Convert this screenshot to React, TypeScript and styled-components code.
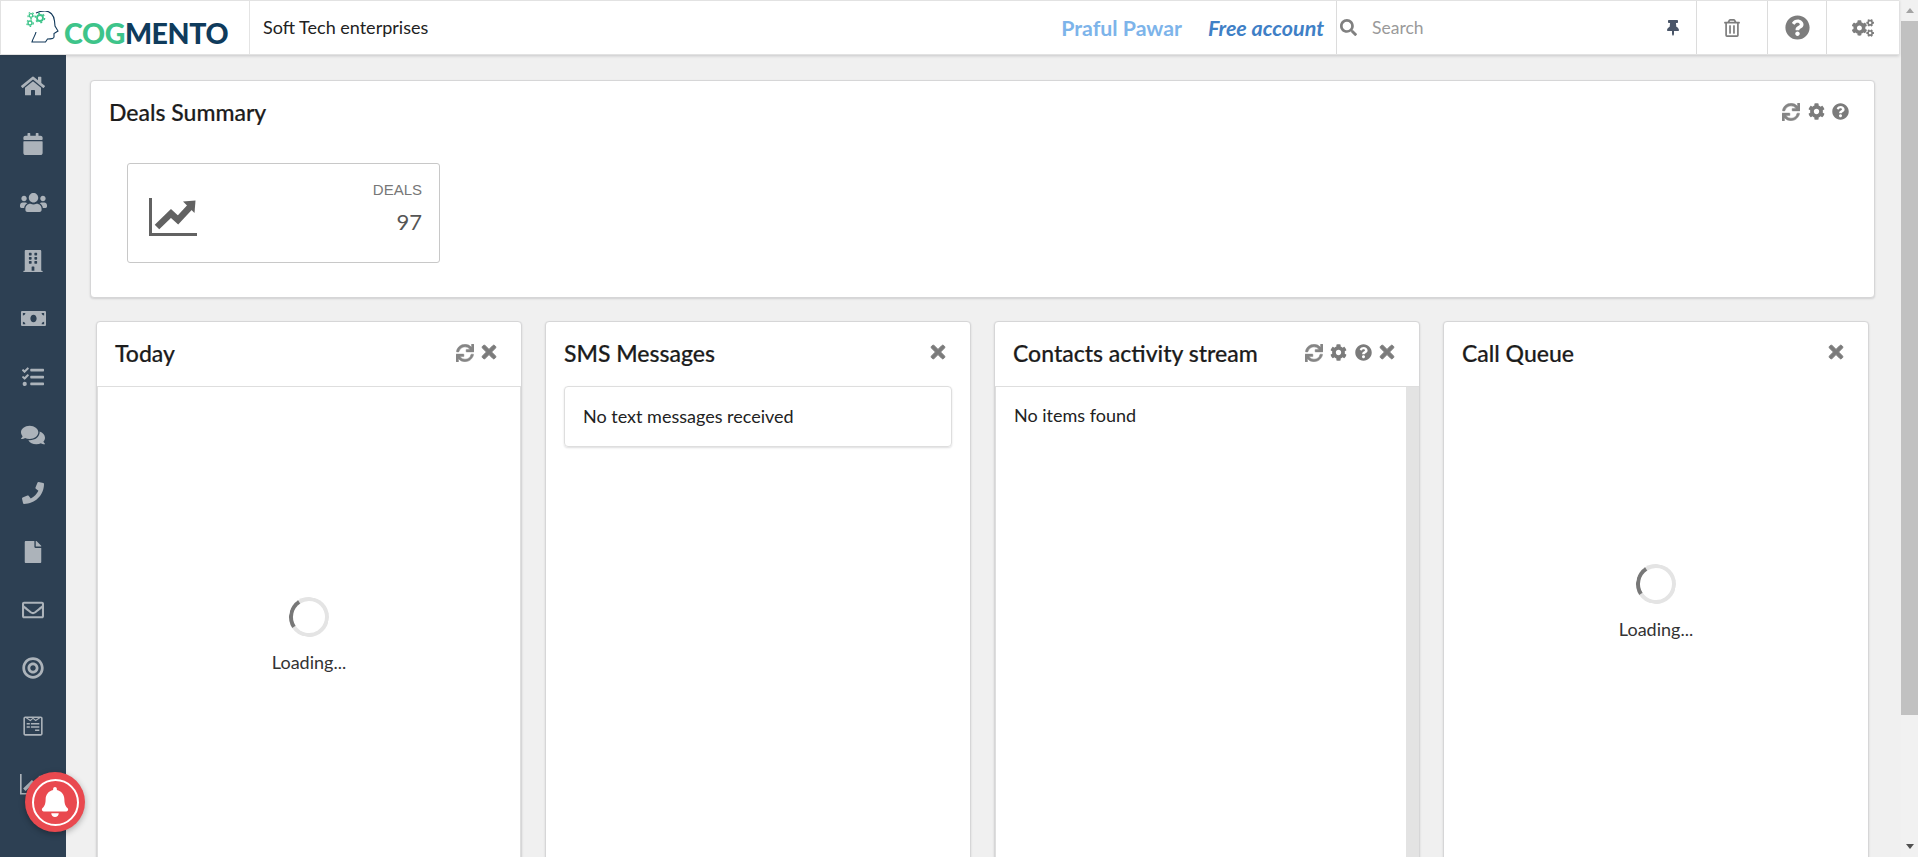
import React from "react";
import styled, { createGlobalStyle } from "styled-components";
import {
  FaBell,
  FaBuilding,
  FaBullseye,
  FaCalendar,
  FaCog,
  FaCogs,
  FaComments,
  FaFile,
  FaHome,
  FaMoneyBill,
  FaPhone,
  FaQuestionCircle,
  FaRegEnvelope,
  FaRegTrashAlt,
  FaSearch,
  FaSync,
  FaTasks,
  FaThumbtack,
  FaTimes,
  FaUsers,
  FaWpforms,
} from "react-icons/fa";

const GlobalStyle = createGlobalStyle`
  html, body {
    margin: 0;
    height: 100%;
    overflow: hidden;
    background: #fff;
  }
  * { box-sizing: border-box; }
  body {
    font-family: Lato, "Liberation Sans", sans-serif;
    font-size: 18px;
    color: #212121;
  }
`;

const Page = styled.div`
  display: flex;
  height: 100vh;
  overflow: hidden;
  background: #f0f0f0;
`;

const Main = styled.div`
  flex: 1;
  min-width: 0;
  display: flex;
  flex-direction: column;
`;

const TopBar = styled.header`
  position: relative;
  z-index: 2;
  flex: none;
  height: 55px;
  margin-right: 2px;
  display: flex;
  align-items: stretch;
  background: #fff;
  border: 1px solid #e2e2e2;
  border-right: none;
  box-shadow: 0 1px 3px rgba(34, 36, 38, 0.2);
`;

const LogoCell = styled.div`
  flex: none;
  width: 249px;
  display: flex;
  align-items: center;
  padding-left: 25px;
  border-right: 1px solid #e4e4e4;
`;

const LogoText = styled.span`
  margin: 12px 0 0 5px;
  font-size: 28.5px;
  font-weight: 900;
  letter-spacing: -0.4px;
  line-height: 1;
  color: #0f3b5c;
`;

const LogoAccent = styled.span`
  color: #3ec48a;
`;

const Company = styled.div`
  flex: 1;
  padding: 0 0 2px 13px;
  display: flex;
  align-items: center;
  font-size: 18px;
  color: #222;
`;

const UserName = styled.span`
  align-self: center;
  margin-right: 26px;
  font-size: 21.3px;
  font-weight: 700;
  color: #7db4ea;
`;

const AccountType = styled.span`
  align-self: center;
  margin-right: 12px;
  font-size: 21.5px;
  font-weight: 700;
  font-style: italic;
  color: #3f80c6;
`;

const SearchCell = styled.div`
  flex: none;
  width: 360px;
  display: flex;
  align-items: center;
  padding: 0 15px 0 3px;
  border-left: 1px solid #dcdcdc;
  color: #808080;
  font-size: 17px;
`;

const SearchInput = styled.input`
  flex: 1;
  min-width: 0;
  margin-left: 13px;
  border: none;
  outline: none;
  background: transparent;
  font-family: inherit;
  font-size: 17.5px;
  color: #222;

  &::placeholder {
    color: #9a9a9a;
    opacity: 1;
  }
`;

const PinIcon = styled(FaThumbtack)`
  color: #4a5568;
  font-size: 16px;
`;

const ToolCell = styled.div<{ $width: number; $size: number }>`
  flex: none;
  width: ${(p) => p.$width}px;
  display: flex;
  align-items: center;
  justify-content: center;
  border-left: 1px solid #dcdcdc;
  color: #7d7d7d;
  font-size: ${(p) => p.$size}px;
`;

const Body = styled.div`
  flex: 1;
  min-height: 0;
  display: flex;
`;

const SideNav = styled.nav`
  flex: none;
  width: 66px;
  padding-top: 2px;
  background: #2d4053;
`;

const NavItem = styled.div<{ $size: number }>`
  height: 58.2px;
  display: flex;
  align-items: center;
  justify-content: center;
  color: #acb3ba;
  font-size: ${(p) => p.$size}px;
`;

const Workspace = styled.main`
  flex: 1;
  min-width: 0;
  padding: 25px 0 0 24px;
  overflow: hidden;
`;

const Panel = styled.section`
  background: #fff;
  border: 1px solid #d6d6d7;
  border-radius: 4px;
  box-shadow: 0 1px 2px rgba(34, 36, 38, 0.15);
`;

const SummaryPanel = styled(Panel)`
  width: 1785px;
  height: 218px;
`;

const PanelHead = styled.div<{ $divided?: boolean }>`
  height: ${(p) => (p.$divided ? 65 : 64)}px;
  display: flex;
  align-items: center;
  justify-content: space-between;
  padding: 0 25px 0 18px;
  ${(p) => p.$divided && "border-bottom: 1px solid #dedede;"}
`;

const PanelTitle = styled.h3`
  margin: 0;
  padding-bottom: 2px;
  font-size: 23px;
  font-weight: 500;
  line-height: 1;
  -webkit-text-stroke: 0.2px #1c1c1c;
  color: #1c1c1c;
`;

const PanelTools = styled.div`
  display: flex;
  align-items: center;
  gap: 7.5px;
  margin-top: -3px;
  color: #7b7b7b;
  font-size: 17px;
`;

const SyncIcon = styled(FaSync)`
  color: #858585;
  font-size: 18px;
  stroke: currentColor;
  stroke-width: 14;
`;

const CloseIcon = styled(FaTimes)`
  font-size: 20px;
  margin: -2px -3px 0 -2px;
  stroke: currentColor;
  stroke-width: 24;
`;

const StatRow = styled.div`
  padding: 18px 0 0 36px;
`;

const StatCard = styled.div`
  width: 313px;
  height: 100px;
  display: flex;
  align-items: center;
  justify-content: space-between;
  padding: 0 17px 0 18px;
  border: 1px solid #c8c8c8;
  border-radius: 3px;
`;

const StatIconWrap = styled.div`
  display: flex;
  color: #626262;
  margin-top: 8px;
  margin-left: 3px;
`;

const StatText = styled.div`
  align-self: flex-start;
  padding-top: 17px;
  text-align: right;
`;

const StatLabel = styled.div`
  font-family: "Liberation Sans", Arial, sans-serif;
  font-size: 15px;
  line-height: 18px;
  color: #777;
`;

const StatValue = styled.div`
  margin-top: 9px;
  font-size: 22px;
  line-height: 28px;
  color: #555;
`;

const WidgetRow = styled.div`
  display: grid;
  grid-template-columns: repeat(4, 426px);
  gap: 23px;
  margin: 23px 0 0 6px;
`;

const Widget = styled(Panel)`
  height: 700px;
  display: flex;
  flex-direction: column;
`;

const WidgetBody = styled.div<{ $framed?: boolean }>`
  flex: 1;
  ${(p) => p.$framed && "border-left: 1px solid #dedede; border-right: 1px solid #dedede;"}
`;

const LoadingBox = styled.div<{ $top: number }>`
  display: flex;
  flex-direction: column;
  align-items: center;
  padding-top: ${(p) => p.$top}px;
`;

const Spinner = styled.div`
  width: 40px;
  height: 40px;
  border-radius: 50%;
  border: 4px solid #e4e4e4;
  border-left-color: #777;
  transform: rotate(12deg);
`;

const LoadingLabel = styled.div`
  margin-top: 15px;
  font-size: 18px;
  line-height: 20px;
  color: #333;
`;

const MessageCard = styled.div`
  height: 61px;
  margin: 0 18px;
  padding: 0 18px 2px 18px;
  display: flex;
  align-items: center;
  border: 1px solid #dedede;
  border-radius: 4px;
  box-shadow: 0 1px 2px rgba(34, 36, 38, 0.15);
  font-size: 18px;
  color: #222;
`;

const StreamBody = styled.div`
  flex: 1;
  display: flex;
`;

const StreamList = styled.div`
  flex: 1;
  padding: 18px 0 0 18px;
  border-left: 1px solid #dedede;
  font-size: 18px;
  line-height: 20px;
  color: #222;
`;

const StreamGutter = styled.div`
  flex: none;
  width: 13px;
  background: #e3e3e3;
`;

const BellButton = styled.div`
  position: absolute;
  left: 25px;
  top: 772px;
  width: 60px;
  height: 60px;
  display: flex;
  align-items: center;
  justify-content: center;
  border-radius: 50%;
  background: #e9494f;
  box-shadow: 0 2px 6px rgba(0, 0, 0, 0.3);
  z-index: 3;
`;

const BellRing = styled.div`
  width: 47px;
  height: 47px;
  display: flex;
  align-items: center;
  justify-content: center;
  border: 2px solid #fff;
  border-radius: 50%;
  color: #fff;
  font-size: 30px;
`;

const ScrollBar = styled.div`
  flex: none;
  width: 19px;
  padding-right: 2px;
  display: flex;
  flex-direction: column;
  background: linear-gradient(to right, #f1f1f1 17px, #fff 17px);
`;

const ScrollArrow = styled.div<{ $down?: boolean }>`
  flex: none;
  height: 21px;
  display: flex;
  align-items: center;
  justify-content: center;

  &::before {
    content: "";
    border-left: 4.5px solid transparent;
    border-right: 4.5px solid transparent;
    ${(p) =>
      p.$down
        ? "border-top: 5px solid #505050;"
        : "border-bottom: 5px solid #a3a3a3;"}
  }
`;

const ScrollThumb = styled.div`
  flex: none;
  height: 694px;
  background: #c1c1c1;
`;

const ScrollTrack = styled.div`
  flex: 1;
`;

function TrendIcon({ size }: { size: number }) {
  return (
    <svg width={size} height={(size * 38) / 48} viewBox="0 0 48 38" fill="none">
      <path d="M1.500 0V36.500H48" stroke="currentColor" strokeWidth="3" />
      <path d="M8 29L22 15.500L29 22L41 9" stroke="currentColor" strokeWidth="6.500" />
      <path d="M34 3.500L46.500 2.500L45.500 15Z" fill="currentColor" />
    </svg>
  );
}

function NavTrend() {
  return <TrendIcon size={26} />;
}

const navItems = [
  { Icon: FaHome, size: 24 },
  { Icon: FaCalendar, size: 22 },
  { Icon: FaUsers, size: 27 },
  { Icon: FaBuilding, size: 22 },
  { Icon: FaMoneyBill, size: 25 },
  { Icon: FaTasks, size: 22 },
  { Icon: FaComments, size: 24 },
  { Icon: FaPhone, size: 22 },
  { Icon: FaFile, size: 22 },
  { Icon: FaRegEnvelope, size: 22 },
  { Icon: FaBullseye, size: 22 },
  { Icon: FaWpforms, size: 22 },
  { Icon: NavTrend, size: 22 },
];

function Logo() {
  return (
    <svg width="33" height="33" viewBox="0 0 33 33" fill="none">
      <path
        d="M10 2C13 .5 16 0 19 0C24 0 28 4 28.500 10L29 15L32 20L28 22.500V26C28 27.500 26 28 21.500 28L19.500 31H6C7 27 9.500 24 10 21"
        stroke="#12395a"
        strokeWidth="1.100"
      />
      <g stroke="#3ec48a">
        <circle cx="14" cy="7" r="3" strokeWidth="1.800" />
        <circle cx="14" cy="7" r="4.600" strokeWidth="1.400" strokeDasharray="2 2.800" />
        <circle cx="5" cy="4.500" r="1.800" strokeWidth="1.300" />
        <circle cx="5" cy="4.500" r="3.100" strokeWidth="1.200" strokeDasharray="1.600 2.300" />
        <circle cx="4" cy="12" r="2" strokeWidth="1.400" />
        <circle cx="4" cy="12" r="3.300" strokeWidth="1.200" strokeDasharray="1.600 2.300" />
      </g>
    </svg>
  );
}

function Loading({ top }: { top: number }) {
  return (
    <LoadingBox $top={top}>
      <Spinner />
      <LoadingLabel>Loading...</LoadingLabel>
    </LoadingBox>
  );
}

export default function App() {
  return (
    <Page>
      <GlobalStyle />
      <Main>
        <TopBar>
          <LogoCell>
            <Logo />
            <LogoText>
              <LogoAccent>COG</LogoAccent>MENTO
            </LogoText>
          </LogoCell>
          <Company>Soft Tech enterprises</Company>
          <UserName>Praful Pawar</UserName>
          <AccountType>Free account</AccountType>
          <SearchCell>
            <FaSearch />
            <SearchInput placeholder="Search" />
            <PinIcon />
          </SearchCell>
          <ToolCell $width={71} $size={18}>
            <FaRegTrashAlt />
          </ToolCell>
          <ToolCell $width={59} $size={25}>
            <FaQuestionCircle />
          </ToolCell>
          <ToolCell $width={73} $size={22}>
            <FaCogs />
          </ToolCell>
        </TopBar>
        <Body>
          <SideNav>
            {navItems.map(({ Icon, size }, i) => (
              <NavItem key={i} $size={size}>
                <Icon />
              </NavItem>
            ))}
          </SideNav>
          <Workspace>
            <SummaryPanel>
              <PanelHead>
                <PanelTitle>Deals Summary</PanelTitle>
                <PanelTools>
                  <SyncIcon />
                  <FaCog />
                  <FaQuestionCircle />
                </PanelTools>
              </PanelHead>
              <StatRow>
                <StatCard>
                  <StatIconWrap>
                    <TrendIcon size={48} />
                  </StatIconWrap>
                  <StatText>
                    <StatLabel>DEALS</StatLabel>
                    <StatValue>97</StatValue>
                  </StatText>
                </StatCard>
              </StatRow>
            </SummaryPanel>
            <WidgetRow>
              <Widget>
                <PanelHead $divided>
                  <PanelTitle>Today</PanelTitle>
                  <PanelTools>
                    <SyncIcon />
                    <CloseIcon />
                  </PanelTools>
                </PanelHead>
                <WidgetBody $framed>
                  <Loading top={210} />
                </WidgetBody>
              </Widget>
              <Widget>
                <PanelHead>
                  <PanelTitle>SMS Messages</PanelTitle>
                  <PanelTools>
                    <CloseIcon />
                  </PanelTools>
                </PanelHead>
                <WidgetBody>
                  <MessageCard>No text messages received</MessageCard>
                </WidgetBody>
              </Widget>
              <Widget>
                <PanelHead $divided>
                  <PanelTitle>Contacts activity stream</PanelTitle>
                  <PanelTools>
                    <SyncIcon />
                    <FaCog />
                    <FaQuestionCircle />
                    <CloseIcon />
                  </PanelTools>
                </PanelHead>
                <StreamBody>
                  <StreamList>No items found</StreamList>
                  <StreamGutter />
                </StreamBody>
              </Widget>
              <Widget>
                <PanelHead>
                  <PanelTitle>Call Queue</PanelTitle>
                  <PanelTools>
                    <CloseIcon />
                  </PanelTools>
                </PanelHead>
                <WidgetBody>
                  <Loading top={178} />
                </WidgetBody>
              </Widget>
            </WidgetRow>
          </Workspace>
        </Body>
      </Main>
      <ScrollBar>
        <ScrollArrow />
        <ScrollThumb />
        <ScrollTrack />
        <ScrollArrow $down />
      </ScrollBar>
      <BellButton>
        <BellRing>
          <FaBell />
        </BellRing>
      </BellButton>
    </Page>
  );
}
